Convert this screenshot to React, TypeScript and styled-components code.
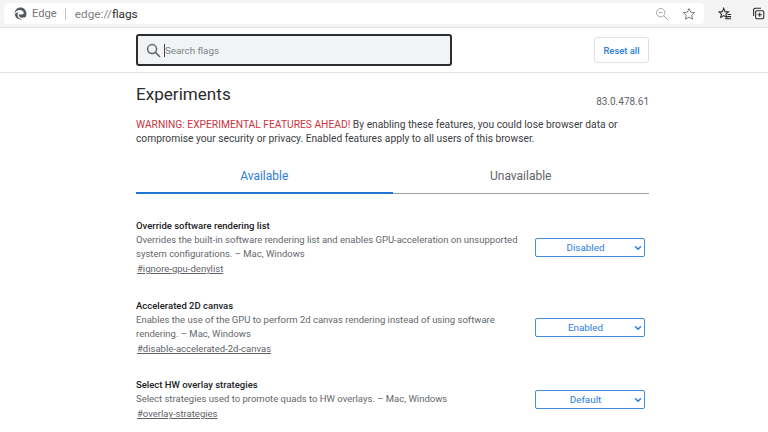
import styled, { createGlobalStyle } from "styled-components";
import { ChevronDown } from "lucide-react";

const experiments = [
  {
    title: "Override software rendering list",
    lines: [
      "Overrides the built-in software rendering list and enables GPU-acceleration on unsupported",
      "system configurations. – Mac, Windows",
    ],
    tag: "#ignore-gpu-denylist",
    value: "Disabled",
  },
  {
    title: "Accelerated 2D canvas",
    lines: [
      "Enables the use of the GPU to perform 2d canvas rendering instead of using software",
      "rendering. – Mac, Windows",
    ],
    tag: "#disable-accelerated-2d-canvas",
    value: "Enabled",
  },
  {
    title: "Select HW overlay strategies",
    lines: ["Select strategies used to promote quads to HW overlays. – Mac, Windows"],
    tag: "#overlay-strategies",
    value: "Default",
  },
];

export default function App() {
  return (
    <>
      <GlobalStyle />
      <Toolbar>
        <AddressBar>
          <svg width="13" height="13" viewBox="0 0 24 24">
            <path
              d="M12 1C5.6 1 1 6 1 12c1.500-4 5.500-6.500 9.500-6.500 4.500 0 7.500 2.800 7.500 5.500 0 1.800-1.500 2.700-3.500 2.700H8.500C8.500 18 12 20 15.500 20c2 0 4-.5 6-1.500C23 16.500 23 14 23 12 23 6 18 1 12 1z"
              fill="#55595f"
            />
            <path d="M1.500 13c.5 6 5.500 10 10.500 10 1.500 0 3-.3 4-.8-5 .5-9.500-3-9.500-8 0-2 1-3.500 2-4.500-3.500.5-6 2-7 3.300z" fill="#55595f" />
          </svg>
          <BrandLabel>Edge</BrandLabel>
          <Divider />
          <UrlText>
            edge://<b>flags</b>
          </UrlText>
          <AddressIcons>
            <svg width="14" height="14" viewBox="0 0 16 16" fill="none" stroke="#9a9a9a" strokeWidth="1">
              <circle cx="6.500" cy="6.500" r="4.800" />
              <path d="M4.500 6.500h4M10 10l5 5" />
            </svg>
            <svg width="14" height="14" viewBox="0 0 16 16" fill="none" stroke="#777" strokeWidth="1.100">
              <path d="M8 1.800l1.900 4.100 4.500.5-3.300 3 .9 4.500L8 11.600l-4 2.300.9-4.500-3.300-3 4.500-.5z" />
            </svg>
          </AddressIcons>
        </AddressBar>
        <ToolIcons>
          <svg width="14" height="14" viewBox="0 0 16 16" fill="none" stroke="#2a2a2a" strokeWidth="1.200">
            <path d="M6.500 1.500l1.500 3.800 4 .3-3 2.500 1 3.900-3.500-2.100L3 12l1-3.900-3-2.500 4-.3z" />
            <path d="M11 8.500h4M10.500 11h4.500M8 13.500h7" />
          </svg>
          <svg width="13" height="13" viewBox="0 0 16 16" fill="none" stroke="#2a2a2a" strokeWidth="1.300">
            <rect x="4.500" y="4.500" width="10" height="10" rx="1.500" />
            <path d="M9.500 7v5M7 9.500h5M2 11V4a2 2 0 0 1 2-2.500H11" />
          </svg>
        </ToolIcons>
      </Toolbar>

      <SearchHeader>
        <SearchInner>
          <SearchBox>
            <svg width="15" height="15" viewBox="0 0 16 16" fill="none" stroke="#5f6368" strokeWidth="1.600">
              <circle cx="6.500" cy="6.500" r="4.800" />
              <path d="M10 10l5 5" />
            </svg>
            <Caret />
            <Placeholder>Search flags</Placeholder>
          </SearchBox>
          <ResetButton>Reset all</ResetButton>
        </SearchInner>
      </SearchHeader>

      <Main>
        <Heading>
          <Title>Experiments</Title>
          <Version>83.0.478.61</Version>
        </Heading>
        <Blurb>
          <Warning>WARNING: EXPERIMENTAL FEATURES AHEAD!</Warning> By enabling these features, you could lose browser data or
          <br />
          compromise your security or privacy. Enabled features apply to all users of this browser.
        </Blurb>
        <Tabs>
          <Tab $active>Available</Tab>
          <Tab>Unavailable</Tab>
        </Tabs>
        <List>
          {experiments.map((item) => (
            <Row key={item.tag}>
              <Info>
                <RowTitle>{item.title}</RowTitle>
                {item.lines.map((line) => (
                  <Description key={line}>{line}</Description>
                ))}
                <Tag>{item.tag}</Tag>
              </Info>
              <Select>
                {item.value}
                <Chevron>
                  <ChevronDown size={10} strokeWidth={3.500} />
                </Chevron>
              </Select>
            </Row>
          ))}
        </List>
      </Main>
    </>
  );
}

const GlobalStyle = createGlobalStyle`
  html, body {
    margin: 0;
    height: 432px;
    overflow: hidden;
    background: #fff;
    font-family: Roboto, "Liberation Sans", sans-serif;
  }
`;

const Toolbar = styled.div`
  height: 28px;
  box-sizing: border-box;
  padding: 3px 0 3px 4px;
  background: #f4f4f4;
  border-bottom: 1px solid #e2e2e2;
  display: flex;
  align-items: stretch;
`;

const AddressBar = styled.div`
  width: 700px;
  background: #fff;
  border-radius: 4px;
  display: flex;
  align-items: center;
  padding: 0 8px 0 10px;
  box-sizing: border-box;
`;

const BrandLabel = styled.span`
  margin-left: 5px;
  font-size: 11.200px;
  color: #777;
`;

const Divider = styled.span`
  width: 1px;
  height: 12px;
  margin: 0 9px 0 8px;
  background: #c4c4c4;
`;

const UrlText = styled.span`
  font-size: 11.800px;
  color: #808080;
  b {
    font-weight: 400;
    color: #2a2a2a;
  }
`;

const AddressIcons = styled.div`
  margin-left: auto;
  display: flex;
  align-items: center;
  gap: 13px;
`;

const ToolIcons = styled.div`
  flex: 1;
  display: flex;
  align-items: center;
  gap: 20px;
  padding-left: 14px;
`;

const SearchHeader = styled.div`
  height: 45px;
  box-sizing: border-box;
  border-bottom: 1px solid #e4e4e4;
`;

const SearchInner = styled.div`
  width: 513px;
  margin-left: 136px;
  padding-top: 6px;
  display: flex;
  justify-content: space-between;
  align-items: flex-start;
`;

const SearchBox = styled.div`
  width: 316px;
  height: 32px;
  box-sizing: border-box;
  border: 2px solid #2b2f33;
  border-radius: 3px;
  background: #f1f3f4;
  display: flex;
  align-items: center;
  padding-left: 8px;
`;

const Caret = styled.span`
  width: 1px;
  height: 13px;
  margin-left: 3px;
  background: #444;
`;

const Placeholder = styled.span`
  font-size: 9.800px;
  color: #80868b;
`;

const ResetButton = styled.button`
  width: 55px;
  height: 26px;
  margin-top: 3px;
  padding: 0;
  border: 1px solid #dcdfe3;
  border-radius: 3px;
  background: #fff;
  font: 500 9.400px Roboto, sans-serif;
  color: #2b7de0;
`;

const Main = styled.main`
  width: 513px;
  margin-left: 136px;
`;

const Heading = styled.div`
  display: flex;
  justify-content: space-between;
  align-items: flex-end;
  padding-top: 10px;
`;

const Title = styled.h1`
  margin: 0;
  font-size: 17.100px;
  line-height: 22px;
  font-weight: 400;
  color: #2a2c30;
`;

const Version = styled.span`
  font-size: 10px;
  line-height: 12px;
  color: #5f6368;
  margin-bottom: -3px;
`;

const Blurb = styled.p`
  margin: 13px 0 0;
  font-size: 10.250px;
  line-height: 14px;
  color: #3c4043;
`;

const Warning = styled.span`
  color: #cc3340;
`;

const Tabs = styled.div`
  display: flex;
  margin-top: 12px;
`;

const Tab = styled.div<{ $active?: boolean }>`
  flex: 0 0 50%;
  height: 36px;
  box-sizing: border-box;
  text-align: center;
  padding-top: 10px;
  font-size: 12px;
  line-height: 16px;
  color: ${(p) => (p.$active ? "#2b7de0" : "#5f6368")};
  border-bottom: ${(p) => (p.$active ? "2px solid #1f76d2" : "1px solid #9aa0a6")};
`;

const List = styled.div`
  display: flex;
  flex-direction: column;
  margin-top: 25px;
`;

const Row = styled.div`
  display: flex;
  justify-content: space-between;
  align-items: center;
  padding-right: 4px;
  margin-bottom: 22.600px;
`;

const Info = styled.div`
  width: 385px;
`;

const RowTitle = styled.div`
  font-size: 9.500px;
  line-height: 14px;
  font-weight: 500;
  color: #202124;
`;

const Description = styled.div`
  font-size: 9.500px;
  line-height: 14px;
  color: #63676c;
  white-space: nowrap;
`;

const Tag = styled.div`
  margin: 1px 0 0 1px;
  font-size: 9.500px;
  line-height: 14px;
  color: #5f6368;
  text-decoration: underline;
`;

const Select = styled.div`
  position: relative;
  width: 110px;
  height: 19px;
  box-sizing: border-box;
  border: 1px solid #3f8ddb;
  border-radius: 2px;
  padding-right: 9px;
  font-size: 9.900px;
  line-height: 17px;
  color: #2b7de0;
  text-align: center;
`;

const Chevron = styled.span`
  position: absolute;
  right: 1px;
  top: 4px;
  display: flex;
`;
